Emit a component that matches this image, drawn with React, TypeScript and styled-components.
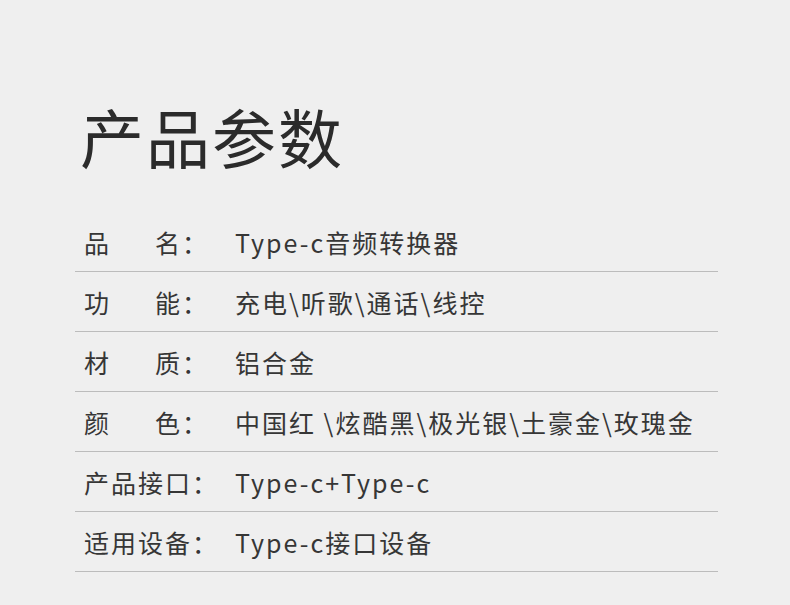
import styled, { createGlobalStyle } from 'styled-components';

const Global = createGlobalStyle`
  html, body {
    margin: 0;
    padding: 0;
    background: #efefef;
  }
  body {
    font-family: "Noto Sans CJK SC", "Noto Sans", sans-serif;
  }
`;

const Page = styled.div`
  width: 790px;
  height: 605px;
  background: #efefef;
  padding: 91px 0 0 75px;
  box-sizing: border-box;
`;

const Title = styled.h1`
  margin: 0 0 33px 5px;
  font-size: 64px;
  line-height: 88px;
  font-weight: 400;
  letter-spacing: 2px;
  color: #2b2b2b;
`;

const Table = styled.div`
  width: 643px;
  display: flex;
  flex-direction: column;
`;

const Row = styled.div`
  height: 59px;
  display: flex;
  align-items: center;
  padding-left: 9px;
  border-bottom: 1px solid #bcbcbc;
  font-size: 25px;
  letter-spacing: 2px;
  color: #363636;
  font-weight: 400;
`;

const LabelCell = styled.div`
  width: 151px;
  flex-shrink: 0;
  display: flex;
  white-space: nowrap;
`;

const Label = styled.span<{ $spread?: boolean }>`
  display: inline-block;
  ${({ $spread }) =>
    $spread &&
    `
    width: 98px;
    text-align: justify;
    text-align-last: justify;
  `}
`;

const Value = styled.span`
  white-space: nowrap;
`;

const rows: [string, string][] = [
  ['品名', 'Type-c音频转换器'],
  ['功能', '充电\\听歌\\通话\\线控'],
  ['材质', '铝合金'],
  ['颜色', '中国红 \\炫酷黑\\极光银\\土豪金\\玫瑰金'],
  ['产品接口', 'Type-c+Type-c'],
  ['适用设备', 'Type-c接口设备'],
];

export default function App() {
  return (
    <>
      <Global />
      <Page>
        <Title>产品参数</Title>
        <Table>
          {rows.map(([label, value]) => (
            <Row key={label}>
              <LabelCell>
                <Label $spread={label.length === 2}>{label}</Label>
                <span>：</span>
              </LabelCell>
              <Value>{value}</Value>
            </Row>
          ))}
        </Table>
      </Page>
    </>
  );
}
